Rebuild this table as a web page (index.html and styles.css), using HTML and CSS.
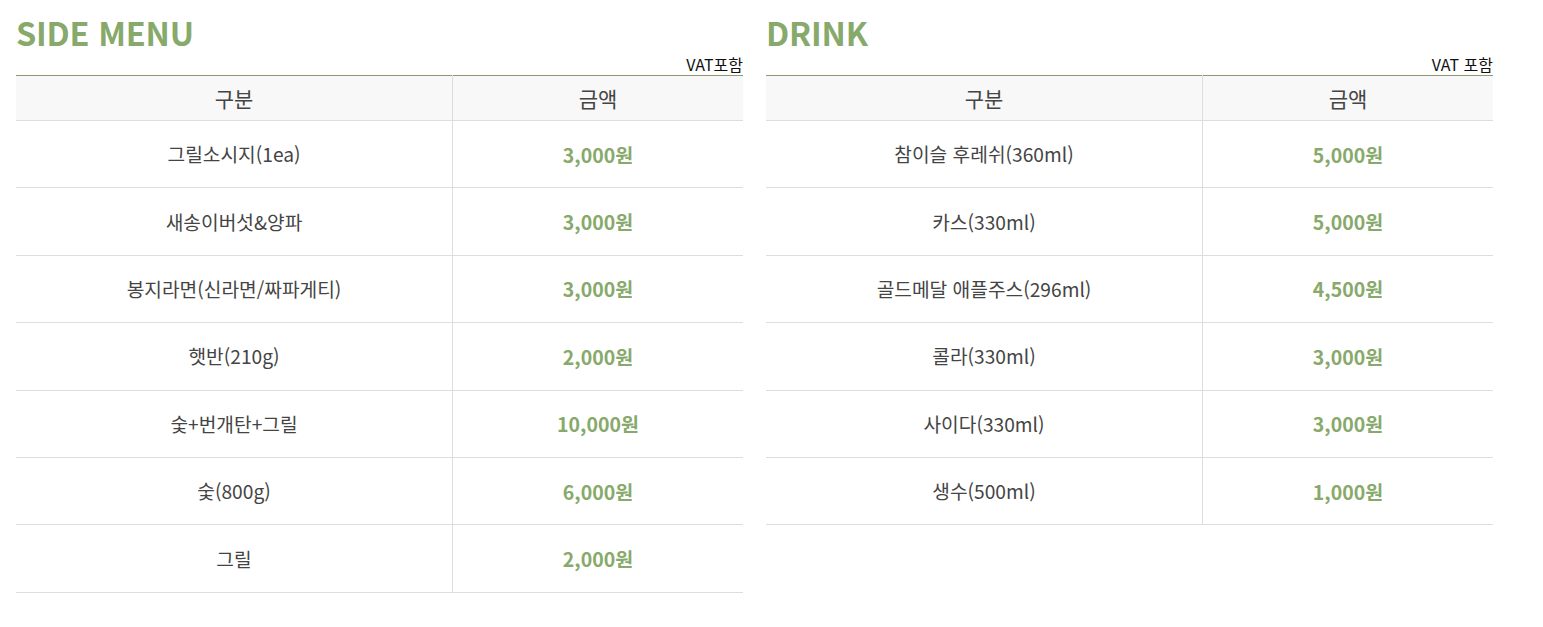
FILE: index.html
```html
<!DOCTYPE html>
<html lang="ko">
<head>
<meta charset="utf-8">
<link rel="stylesheet" href="styles.css">
</head>
<body>
<div class="wrap">
  <section class="menu">
    <h2 class="title">SIDE MENU</h2>
    <div class="vat">VAT포함</div>
    <table class="price">
      <thead><tr><th class="c-name">구분</th><th>금액</th></tr></thead>
      <tbody>
        <tr><td>그릴소시지(1ea)</td><td class="won">3,000원</td></tr>
        <tr><td>새송이버섯&amp;양파</td><td class="won">3,000원</td></tr>
        <tr><td>봉지라면(신라면/짜파게티)</td><td class="won">3,000원</td></tr>
        <tr><td>햇반(210g)</td><td class="won">2,000원</td></tr>
        <tr><td>숯+번개탄+그릴</td><td class="won">10,000원</td></tr>
        <tr><td>숯(800g)</td><td class="won">6,000원</td></tr>
        <tr><td>그릴</td><td class="won">2,000원</td></tr>
      </tbody>
    </table>
  </section>
  <section class="menu">
    <h2 class="title">DRINK</h2>
    <div class="vat">VAT 포함</div>
    <table class="price">
      <thead><tr><th class="c-name">구분</th><th>금액</th></tr></thead>
      <tbody>
        <tr><td>참이슬 후레쉬(360ml)</td><td class="won">5,000원</td></tr>
        <tr><td>카스(330ml)</td><td class="won">5,000원</td></tr>
        <tr><td>골드메달 애플주스(296ml)</td><td class="won">4,500원</td></tr>
        <tr><td>콜라(330ml)</td><td class="won">3,000원</td></tr>
        <tr><td>사이다(330ml)</td><td class="won">3,000원</td></tr>
        <tr><td>생수(500ml)</td><td class="won">1,000원</td></tr>
      </tbody>
    </table>
  </section>
</div>
</body>
</html>
```
FILE: styles.css
```css
html, body {
  margin: 0;
  padding: 0;
  background: #fff;
}
body {
  font-family: "Noto Sans CJK KR", "Noto Sans", sans-serif;
  color: #333;
}
.wrap {
  display: flex;
  align-items: flex-start;
  gap: 23px;
  padding: 10px 16px 0;
}
.menu {
  width: 727px;
}
.title {
  margin: 0;
  font-size: 32.5px;
  line-height: 44px;
  font-weight: 700;
  color: #87a96b;
  letter-spacing: -0.2px;
}
.vat {
  text-align: right;
  font-size: 16px;
  line-height: 20px;
  color: #111;
  margin-bottom: 1px;
}
.price {
  width: 100%;
  border-collapse: collapse;
  table-layout: fixed;
  border-top: 1px solid #8c9a74;
}
.price th {
  background: #f8f8f8;
  font-weight: 400;
  font-size: 21px;
  color: #444;
  height: 44px;
  padding: 0;
  border-bottom: 1px solid #ddd;
}
.price th.c-name {
  width: 436px;
  border-right: 1px solid #ddd;
}
.price td {
  height: 66.4px;
  padding: 0;
  text-align: center;
  font-size: 19.2px;
  color: #444;
  border-bottom: 1px solid #ddd;
}
.price td:first-child {
  border-right: 1px solid #ddd;
}
.price td.won {
  font-weight: 700;
  color: #87a96b;
  font-size: 19.5px;
}
```
